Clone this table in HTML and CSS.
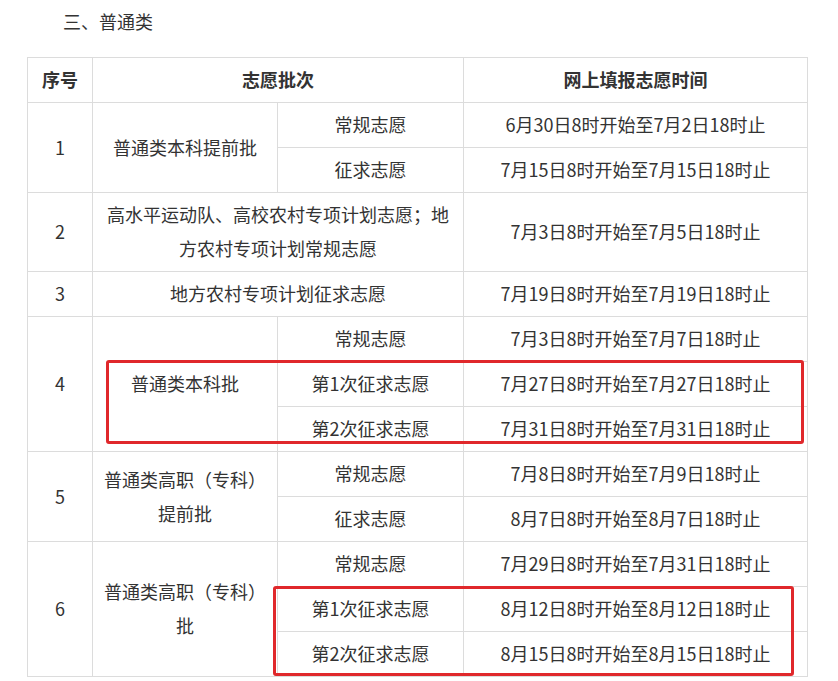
FILE: index.html
```html
<!DOCTYPE html>
<html lang="zh-CN">
  <head>
    <meta charset="UTF-8" />
    <meta name="viewport" content="width=device-width, initial-scale=1.0" />
    <title>普通类志愿填报时间</title>
    <link rel="stylesheet" href="styles.css">
  </head>

  <body>
    <div class="article">
      <p class="section-title">三、普通类</p>

      <!-- Schedule table, red boxes are annotations drawn over it -->
      <div class="table-wrap">
        <table class="schedule">
          <colgroup>
            <col class="col-no" />
            <col class="col-batch" />
            <col class="col-type" />
            <col class="col-time" />
          </colgroup>
          <thead>
            <tr>
              <th>序号</th>
              <th colspan="2">志愿批次</th>
              <th>网上填报志愿时间</th>
            </tr>
          </thead>
          <tbody>
            <tr>
              <td rowspan="2">1</td>
              <td rowspan="2">普通类本科提前批</td>
              <td>常规志愿</td>
              <td>6月30日8时开始至7月2日18时止</td>
            </tr>
            <tr>
              <td>征求志愿</td>
              <td>7月15日8时开始至7月15日18时止</td>
            </tr>
            <tr>
              <td>2</td>
              <td colspan="2">高水平运动队、高校农村专项计划志愿；地方农村专项计划常规志愿</td>
              <td>7月3日8时开始至7月5日18时止</td>
            </tr>
            <tr>
              <td>3</td>
              <td colspan="2">地方农村专项计划征求志愿</td>
              <td>7月19日8时开始至7月19日18时止</td>
            </tr>
            <tr>
              <td rowspan="3">4</td>
              <td rowspan="3">普通类本科批</td>
              <td>常规志愿</td>
              <td>7月3日8时开始至7月7日18时止</td>
            </tr>
            <tr>
              <td>第1次征求志愿</td>
              <td>7月27日8时开始至7月27日18时止</td>
            </tr>
            <tr>
              <td>第2次征求志愿</td>
              <td>7月31日8时开始至7月31日18时止</td>
            </tr>
            <tr>
              <td rowspan="2">5</td>
              <td rowspan="2">普通类高职（专科）提前批</td>
              <td>常规志愿</td>
              <td>7月8日8时开始至7月9日18时止</td>
            </tr>
            <tr>
              <td>征求志愿</td>
              <td>8月7日8时开始至8月7日18时止</td>
            </tr>
            <tr>
              <td rowspan="3">6</td>
              <td rowspan="3">普通类高职（专科）批</td>
              <td>常规志愿</td>
              <td>7月29日8时开始至7月31日18时止</td>
            </tr>
            <tr>
              <td>第1次征求志愿</td>
              <td>8月12日8时开始至8月12日18时止</td>
            </tr>
            <tr>
              <td>第2次征求志愿</td>
              <td>8月15日8时开始至8月15日18时止</td>
            </tr>
          </tbody>
        </table>

        <div class="mark mark-undergrad"></div>
        <div class="mark mark-vocational"></div>
      </div>
    </div>
  </body>
</html>
```

FILE: styles.css
```css
:root {
  --text-color: #333;
  --border-color: #dcdcdc;
  --mark-color: #e0282b;
}

* {
  box-sizing: border-box;
  margin: 0;
  padding: 0;
}

body {
  background-color: #fff;
  color: var(--text-color);
  font-family: "Noto Sans CJK SC", "Microsoft YaHei", sans-serif;
  font-size: 18px;
  line-height: 34px;
  overflow: hidden;
}

.article {
  padding: 4px 0 0 27px;
}

.section-title {
  text-indent: 2em;
  margin-bottom: 19px;
}

.table-wrap {
  position: relative;
  width: 780px;
}

.schedule {
  width: 780px;
  table-layout: fixed;
  border-collapse: collapse;
}

.col-no {
  width: 65px;
}

.col-batch {
  width: 185px;
}

.col-type {
  width: 186px;
}

.col-time {
  width: 344px;
}

.schedule th,
.schedule td {
  border: 1px solid var(--border-color);
  padding: 4px 10px 6px;
  text-align: center;
  vertical-align: middle;
  font-weight: 400;
}

.schedule th {
  font-weight: 700;
}

/* Red annotation boxes */
.mark {
  position: absolute;
  border: 3px solid var(--mark-color);
  border-radius: 3px;
  pointer-events: none;
}

.mark-undergrad {
  left: 79px;
  top: 303px;
  width: 698px;
  height: 84px;
}

.mark-vocational {
  left: 246px;
  top: 529px;
  width: 521px;
  height: 90px;
}
```
